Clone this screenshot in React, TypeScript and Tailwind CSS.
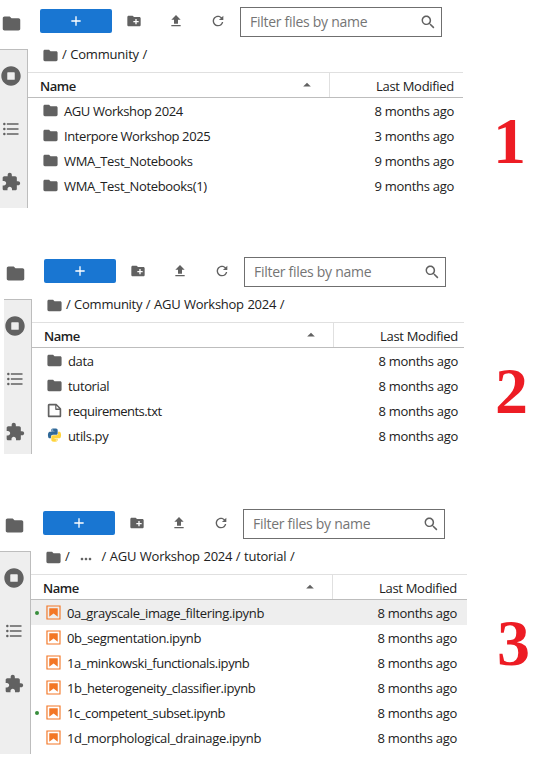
import type { ReactNode } from 'react';

type Kind = 'folder' | 'file' | 'python' | 'notebook';
type Entry = { name: string; modified: string; kind: Kind; tracking?: string; selected?: boolean; running?: boolean };

function Icon({ d, box = 24, className }: { d: string; box?: number; className: string }) {
  return (
    <svg viewBox={`0 0 ${box} ${box}`} className={`shrink-0 ${className}`} fill="currentColor">
      <path d={d} />
    </svg>
  );
}

const FOLDER = 'M10 4H4c-1.1 0-1.99.9-1.99 2L2 18c0 1.1.9 2 2 2h16c1.1 0 2-.9 2-2V8c0-1.1-.9-2-2-2h-8l-2-2z';
const NEW_FOLDER =
  'M20 6h-8l-2-2H4c-1.11 0-1.99.89-1.99 2L2 18c0 1.11.89 2 2 2h16c1.11 0 2-.89 2-2V8c0-1.11-.89-2-2-2zm-1 8h-3v3h-2v-3h-3v-2h3V9h2v3h3v2z';
const UPLOAD = 'M9 16h6v-6h4l-7-7-7 7h4zm-4 2h14v2H5z';
const REFRESH =
  'M9 13.5c-2.49 0-4.5-2.01-4.5-4.5S6.51 4.5 9 4.5c1.24 0 2.36.52 3.17 1.33L10 8h5V3l-1.76 1.76C12.15 3.68 10.66 3 9 3 5.69 3 3.01 5.69 3.01 9S5.69 15 9 15c2.97 0 5.43-2.16 5.9-5h-1.52c-.46 2-2.24 3.5-4.38 3.5z';
const SEARCH =
  'M12.1,10.9h-0.7l-0.2-0.2c0.8-0.9,1.3-2.2,1.3-3.5c0-3-2.4-5.4-5.4-5.4S1.8,4.2,1.8,7.1s2.4,5.4,5.4,5.4c1.3,0,2.5-0.5,3.5-1.3l0.2,0.2v0.7l4.1,4.1l1.2-1.2L12.1,10.9z M7.1,10.9c-2.1,0-3.7-1.7-3.7-3.7s1.7-3.7,3.7-3.7s3.7,1.7,3.7,3.7S9.2,10.9,7.1,10.9z';
const RUNNING =
  'M256 8C119 8 8 119 8 256s111 248 248 248 248-111 248-248S393 8 256 8zm96 328c0 8.8-7.2 16-16 16H176c-8.8 0-16-7.2-16-16V176c0-8.8 7.2-16 16-16h160c8.8 0 16 7.2 16 16v160z';
const TOC =
  'M7,5H21V7H7V5M7,13V11H21V13H7M4,4.5A1.5,1.5 0 0,1 5.5,6A1.5,1.5 0 0,1 4,7.5A1.5,1.5 0 0,1 2.5,6A1.5,1.5 0 0,1 4,4.5M4,10.5A1.5,1.5 0 0,1 5.5,12A1.5,1.5 0 0,1 4,13.5A1.5,1.5 0 0,1 2.5,12A1.5,1.5 0 0,1 4,10.5M7,19V17H21V19H7M4,16.5A1.5,1.5 0 0,1 5.5,18A1.5,1.5 0 0,1 4,19.5A1.5,1.5 0 0,1 2.5,18A1.5,1.5 0 0,1 4,16.5Z';
const PUZZLE =
  'M20.5 11H19V7c0-1.1-.9-2-2-2h-4V3.5C13 2.12 11.88 1 10.5 1S8 2.12 8 3.5V5H4c-1.1 0-1.99.9-1.99 2v3.8H3.5c1.49 0 2.7 1.21 2.7 2.7s-1.21 2.7-2.7 2.7H2V20c0 1.1.9 2 2 2h3.8v-1.5c0-1.49 1.21-2.7 2.7-2.7 1.49 0 2.7 1.21 2.7 2.7V22H17c1.1 0 2-.9 2-2v-4h1.5c1.38 0 2.5-1.12 2.5-2.5S21.88 11 20.5 11z';
const FILE =
  'M19.3 8.2l-5.5-5.5c-.3-.3-.7-.5-1.2-.5H3.9c-.8.1-1.6.9-1.6 1.8v14.1c0 .9.7 1.6 1.6 1.6h14.2c.9 0 1.6-.7 1.6-1.6V9.4c.1-.5-.1-.9-.4-1.2zm-5.8-3.3l3.4 3.6h-3.4V4.9zm3.9 12.7H4.7c-.1 0-.2 0-.2-.2V4.7c0-.2.1-.3.2-.3h7.2v4.4s0 .8.3 1.1c.3.3 1.1.3 1.1.3h4.3v7.2s-.1.2-.2.2z';

function EntryIcon({ kind }: { kind: Kind }) {
  if (kind === 'folder') return <Icon d={FOLDER} className="size-[17px]" />;
  if (kind === 'file') return <Icon d={FILE} box={22} className="size-[17px]" />;
  if (kind === 'python')
    return (
      <svg viewBox="-2 -9 132 132" className="size-[17px] shrink-0">
        <path
          fill="#306998"
          d="M63.391 1.988c-4.222.02-8.252.379-11.8 1.007-10.45 1.846-12.346 5.71-12.346 12.837v9.411h24.693v3.137H29.977c-7.176 0-13.46 4.313-15.426 12.521-2.268 9.405-2.368 15.275 0 25.096 1.755 7.311 5.947 12.519 13.124 12.519h8.491V67.234c0-8.151 7.051-15.34 15.426-15.34h24.665c6.866 0 12.346-5.654 12.346-12.548V15.833c0-6.693-5.646-11.72-12.346-12.837-4.244-.706-8.645-1.027-12.866-1.008zM50.037 9.557c2.55 0 4.634 2.117 4.634 4.721 0 2.593-2.083 4.69-4.634 4.69-2.56 0-4.633-2.097-4.633-4.69-.001-2.604 2.073-4.721 4.633-4.721z"
        />
        <path
          fill="#ffd43b"
          d="M91.682 28.38v10.966c0 8.5-7.208 15.655-15.426 15.655H51.591c-6.756 0-12.346 5.783-12.346 12.549v23.515c0 6.691 5.818 10.628 12.346 12.547 7.816 2.297 16.013 2.713 24.665 0 6.216-1.801 12.346-5.423 12.346-12.547v-9.412H63.938v-3.138h37.012c7.176 0 9.852-5.005 12.348-12.519 2.578-7.735 2.467-15.174 0-25.096-1.774-7.145-5.161-12.521-12.348-12.521h-9.268zM77.809 87.927c2.561 0 4.634 2.097 4.634 4.692 0 2.602-2.074 4.719-4.634 4.719-2.55 0-4.633-2.117-4.633-4.719 0-2.595 2.083-4.692 4.633-4.692z"
        />
      </svg>
    );
  return (
    <svg viewBox="0 0 22 22" className="size-[17px] shrink-0" fill="#f37726">
      <path d="M18.7 3.3v15.4H3.3V3.3h15.4m1.5-1.5H1.8v18.3h18.3l.1-18.3z" />
      <path d="M16.5 16.5l-5.4-4.3-5.6 4.3v-11h11z" />
    </svg>
  );
}

type PanelProps = {
  label: string;
  height: string;
  indent: string;
  railWidth: string;
  railHeight: string;
  railPad: string;
  width: string;
  tail: string;
  gap: string;
  crumbs: ReactNode;
  entries: Entry[];
};

function Panel({ label, height, indent, railWidth, railHeight, railPad, width, tail, gap, crumbs, entries }: PanelProps) {
  return (
    <section className={`flex shrink-0 ${height} ${indent}`}>
      <div className={`flex shrink-0 flex-col ${railWidth}`}>
        <div className={`h-[49px] pt-[12.5px] ${railPad}`}>
          <Icon d={FOLDER} className="-ml-[0.5px] size-[21px]" />
        </div>
        <div
          className={`flex flex-col border-t border-r border-[#bdbdbd] bg-[#eeeeee] ${railHeight} ${railPad}`}
        >
          <Icon d={RUNNING} box={512} className="mt-4 size-5" />
          <Icon d={TOC} className="mt-[33px] size-5" />
          <Icon d={PUZZLE} className="mt-[33px] size-5" />
        </div>
      </div>

      <div className={`flex shrink-0 flex-col ${width}`}>
        <div className="flex h-[44px] items-start pl-3">
          <div className="mt-[9px] flex h-6 w-[72px] items-center justify-center rounded-[2px] bg-[#1976d2] text-white">
            <Icon d="M19 13h-6v6h-2v-6H5v-2h6V5h2v6h6v2z" className="size-4" />
          </div>
          <Icon d={NEW_FOLDER} className="mt-[13px] ml-[14px] size-4" />
          <Icon d={UPLOAD} className="mt-[13px] ml-[26px] size-4" />
          <Icon d={REFRESH} box={18} className="mt-[13px] ml-[26px] size-4" />
          <div className="mt-[7px] ml-[14px] flex h-[30px] w-[202px] items-center border border-[#6f6f6f] pr-[5px] pl-[9px]">
            <span className="flex-1 pb-[2px] text-[14px] tracking-[-0.28px] text-[#757575]">Filter files by name</span>
            <Icon d={SEARCH} box={18} className="size-4" />
          </div>
        </div>
        <div className="flex h-[28px] items-center pb-[6px] pl-[14px] whitespace-pre text-[#212121]">
          <Icon d={FOLDER} className="mr-[3px] size-[17px] text-[#616161]" />
          {crumbs}
        </div>
        <div className="flex h-[26px] border-t border-b border-t-[#e0e0e0] border-b-[#bdbdbd] text-[#212121]">
          <div className="flex w-[302px] items-center justify-between border-r border-[#e0e0e0] pt-[3px] pr-[13px] pl-3">
            <span className="font-semibold tracking-[-0.5px]">Name</span>
            <Icon d="M5.2,10.5L9,6.8l3.8,3.8H5.2z" box={18} className="mb-[3px] size-[18px] text-[#616161]" />
          </div>
          <div className={`flex flex-1 items-center justify-end pt-[3px] tracking-[-0.3px] ${tail}`}>Last Modified</div>
        </div>
        {entries.map((e) => (
          <div
            key={e.name}
            className={`flex h-[25px] shrink-0 items-center text-[#212121] ${tail} ${e.selected ? 'bg-[#eeeeee]' : ''}`}
          >
            <span className={`ml-[4px] size-1 rounded-full ${e.running ? 'bg-[#388e3c]' : ''}`} />
            <span className="mr-[5px] mb-px ml-[6px] text-[#616161]">
              <EntryIcon kind={e.kind} />
            </span>
            <span className={`flex-1 pt-[2px] ${e.tracking ?? 'tracking-[-0.36px]'}`}>{e.name}</span>
            <span className="pt-[2px] tracking-[-0.28px]">{e.modified}</span>
          </div>
        ))}
      </div>
      <div
        className={`pt-[104px] font-['Liberation_Serif','Times_New_Roman',serif] text-[66px] leading-[73px] font-bold tracking-normal text-[#ed1c24] ${gap}`}
      >
        {label}
      </div>
    </section>
  );
}

export default function App() {
  return (
    <main className="flex h-[762px] w-[538px] flex-col overflow-hidden bg-white font-['Open_Sans','Noto_Sans',sans-serif] text-[13px] tracking-[-0.2px] text-[#616161]">
      <Panel
        label="1"
        height="h-[250px]"
        indent="pl-0"
        railWidth="w-[28px]"
        railHeight="h-[159px]"
        railPad="pl-px"
        width="w-[435px]"
        tail="pr-[9px]"
        gap="pl-[30px]"
        crumbs={<span className="[word-spacing:0.5px]">/ Community /</span>}
        entries={[
          { name: 'AGU Workshop 2024', modified: '8 months ago', kind: 'folder', tracking: 'tracking-[-0.4px]' },
          { name: 'Interpore Workshop 2025', modified: '3 months ago', kind: 'folder', tracking: 'tracking-[-0.41px]' },
          { name: 'WMA_Test_Notebooks', modified: '9 months ago', kind: 'folder', tracking: 'tracking-[-0.34px]' },
          { name: 'WMA_Test_Notebooks(1)', modified: '9 months ago', kind: 'folder', tracking: 'tracking-[-0.34px]' },
        ]}
      />
      <Panel
        label="2"
        height="h-[252px]"
        indent="pl-1"
        railWidth="w-[28px]"
        railHeight="h-[155px]"
        railPad="pl-px"
        width="w-[432px]"
        tail="pr-[6px]"
        gap="pl-[31px]"
        crumbs={<span className="tracking-[-0.26px] [word-spacing:0.5px]">/ Community / AGU Workshop 2024 /</span>}
        entries={[
          { name: 'data', modified: '8 months ago', kind: 'folder' },
          { name: 'tutorial', modified: '8 months ago', kind: 'folder' },
          { name: 'requirements.txt', modified: '8 months ago', kind: 'file', tracking: 'tracking-[-0.53px]' },
          { name: 'utils.py', modified: '8 months ago', kind: 'python' },
        ]}
      />
      <Panel
        label="3"
        height="h-[260px]"
        indent="pl-0"
        railWidth="w-[31px]"
        railHeight="h-[203px]"
        railPad="pl-1"
        width="w-[436px]"
        tail="pr-[10px]"
        gap="pl-[30px]"
        crumbs={
          <>
            <span>/</span>
            <Icon
              d="M6 10c-1.1 0-2 .9-2 2s.9 2 2 2 2-.9 2-2-.9-2-2-2zm12 0c-1.1 0-2 .9-2 2s.9 2 2 2 2-.9 2-2-.9-2-2-2zm-6 0c-1.1 0-2 .9-2 2s.9 2 2 2 2-.9 2-2-.9-2-2-2z"
              className="mx-[8px] mt-[3px] size-4 text-[#616161]"
            />
            <span className="tracking-[-0.24px] [word-spacing:0.5px]">/ AGU Workshop 2024 / tutorial /</span>
          </>
        }
        entries={[
          { name: '0a_grayscale_image_filtering.ipynb', modified: '8 months ago', kind: 'notebook', tracking: 'tracking-[-0.34px]', selected: true, running: true },
          { name: '0b_segmentation.ipynb', modified: '8 months ago', kind: 'notebook' },
          { name: '1a_minkowski_functionals.ipynb', modified: '8 months ago', kind: 'notebook', tracking: 'tracking-[-0.4px]' },
          { name: '1b_heterogeneity_classifier.ipynb', modified: '8 months ago', kind: 'notebook', tracking: 'tracking-[-0.38px]' },
          { name: '1c_competent_subset.ipynb', modified: '8 months ago', kind: 'notebook', tracking: 'tracking-[-0.41px]', running: true },
          { name: '1d_morphological_drainage.ipynb', modified: '8 months ago', kind: 'notebook', tracking: 'tracking-[-0.33px]' },
        ]}
      />
    </main>
  );
}
